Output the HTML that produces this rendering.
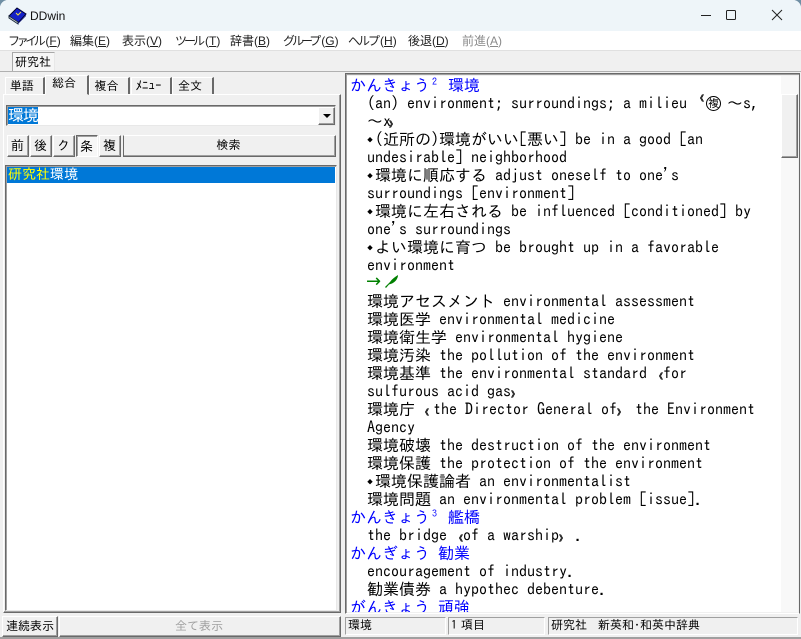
<!DOCTYPE html>
<html lang="ja"><head><meta charset="utf-8"><title>DDwin</title>
<style>
html,body{margin:0;padding:0;background:#6f8fa5}
body{width:801px;height:639px;overflow:hidden;position:relative}
*{box-sizing:border-box}
.a{position:absolute;white-space:pre}
#win{position:absolute;left:0;top:0;width:801px;height:639px;background:#f0f0f0;border-radius:8px 8px 0 0;overflow:hidden}
.g{font-family:"IPAGothic","Noto Sans CJK JP",monospace;font-size:12px;line-height:16px;color:#000}
.m{font-family:"Liberation Sans","Noto Sans CJK JP",sans-serif;font-size:12px;line-height:16px;color:#222}
.k{letter-spacing:-3.4px;margin-right:3px}
.btn{position:absolute;background:#f0f0f0;border:1px solid;border-color:#fff #696969 #696969 #fff;box-shadow:inset -1px -1px 0 #a0a0a0;text-align:center;font-family:"IPAGothic",monospace;font-size:12px;line-height:18px;color:#000}
.s14{font-size:13px;line-height:20px;padding-right:1px}
.sunk{position:absolute;border:1px solid;border-color:#a0a0a0 #fff #fff #a0a0a0;font-family:"IPAGothic",monospace;font-size:12px;line-height:15px;padding-left:2px;color:#000;white-space:pre}
.tab{position:absolute;font-family:"IPAGothic",monospace;font-size:12px;line-height:16px;text-align:center;background:#f0f0f0;border-left:1px solid #fff;border-top:1px solid #fff;border-right:2px solid #696969;padding-right:5px}
#txt{position:absolute;left:347px;top:76px;width:434px;height:536px;background:#fff;overflow:hidden;font-family:"IPAGothic","Noto Sans CJK JP",monospace;font-size:16px;line-height:18px;color:#000}
#txt div{position:absolute;white-space:pre;height:18px}
.b{color:#0000ff}
.d{font-size:6px;display:inline-block;width:8px;vertical-align:3px;line-height:6px}
.q{font-size:8px;display:inline-block;width:8px;font-weight:bold;line-height:8px}
.qo{position:relative;left:-2px}
</style></head><body>
<div id="win">
<!-- title bar -->
<div class="a" style="left:0;top:0;width:801px;height:31px;background:#eef5f9"></div>
<svg class="a" style="left:8px;top:6px" width="19" height="19" viewBox="0 0 19 19">
<path d="M1 10 L9 2 L18 8 L10 17 Z" fill="#1420c8" stroke="#000030" stroke-width="1"/>
<path d="M1 10 L1 12 L10 18 L10 16 Z" fill="#d8d8e0" stroke="#203040" stroke-width="1"/>
<path d="M10 17 L18 9 L18 10 L10 18Z" fill="#101880"/>
<path d="M8 7 L10 9 L13 6" fill="none" stroke="#f0e040" stroke-width="1"/>
</svg>
<div class="a" style="left:30px;top:8px;font:12px/16px 'Liberation Sans',sans-serif;color:#111">DDwin</div>
<svg class="a" style="left:680px;top:5px" width="121" height="22" viewBox="0 0 121 22" fill="none" stroke="#222" stroke-width="1">
<path d="M21 10.5H31"/><rect x="46.5" y="5.5" width="9" height="9" rx="1"/>
<path d="M92 5L102 15M102 5L92 15"/></svg>
<!-- menu -->
<div class="a" style="left:0;top:31px;width:801px;height:19px;background:#fff"></div>
<div class="a m" style="left:8px;top:33px"><span class="k">ファイル</span>(<u>F</u>)</div>
<div class="a m" style="left:70px;top:33px">編集(<u>E</u>)</div>
<div class="a m" style="left:122px;top:33px">表示(<u>V</u>)</div>
<div class="a m" style="left:175px;top:33px"><span class="k" style="letter-spacing:-3px">ツール</span>(<u>T</u>)</div>
<div class="a m" style="left:230px;top:33px">辞書(<u>B</u>)</div>
<div class="a m" style="left:283px;top:33px"><span class="k" style="letter-spacing:-3px">グループ</span>(<u>G</u>)</div>
<div class="a m" style="left:348px;top:33px"><span class="k" style="letter-spacing:-2px;margin-right:2px">ヘルプ</span>(<u>H</u>)</div>
<div class="a m" style="left:408px;top:33px">後退(<u>D</u>)</div>
<div class="a m" style="left:462px;top:33px;color:#8a8a8a">前進(<u>A</u>)</div>
<div class="a" style="left:0;top:50px;width:801px;height:1px;background:#e0e0e0"></div>
<!-- toolbar -->
<div class="a" style="left:12px;top:52px;width:43px;height:20px;border:1px solid;border-color:#a8a8a8 #e8e8e8 #fff #a8a8a8;background:#f6f6f6"></div>
<div class="a g" style="left:15px;top:54px">研究社</div>
<div class="a" style="left:0;top:71px;width:801px;height:1px;background:#b0b0b0"></div>
<!-- left panel -->
<div class="a" style="left:3px;top:94px;width:338px;height:519px;border:1px solid;border-color:#fff #696969 #696969 #fff;box-shadow:inset -1px -1px 0 #a0a0a0"></div>
<div class="tab" style="left:5px;top:77px;width:40px;height:17px">単語</div>
<div class="tab" style="left:89px;top:77px;width:41px;height:17px">複合</div>
<div class="tab" style="left:131px;top:77px;width:41px;height:17px;font-size:13px">ﾒﾆｭｰ</div>
<div class="tab" style="left:172px;top:77px;width:42px;height:17px">全文</div>
<div class="tab" style="left:45px;top:75px;width:44px;height:20px;border-bottom:1px solid #f0f0f0;line-height:15px">総合</div>
<!-- combo -->
<div class="a" style="left:6px;top:105px;width:330px;height:21px;background:#fff;border:1px solid;border-color:#696969 #e8e8e8 #e8e8e8 #696969;box-shadow:inset 1px 1px 0 #a0a0a0"></div>
<div class="a" style="left:8px;top:107px;width:30px;height:17px;background:#0078d7"></div>
<div class="a" style="left:8px;top:107px;font:16px/17px 'IPAGothic',monospace;color:#fff;width:30px;letter-spacing:-1px">環境</div>
<div class="btn" style="left:318px;top:107px;width:17px;height:18px"></div>
<div class="a" style="left:323px;top:114px;width:0;height:0;border-left:4px solid transparent;border-right:4px solid transparent;border-top:4px solid #000"></div>
<!-- buttons -->
<div class="btn s14" style="left:7px;top:135px;width:22px;height:22px">前</div>
<div class="btn s14" style="left:30px;top:135px;width:22px;height:22px">後</div>
<div class="btn s14" style="left:53px;top:135px;width:22px;height:22px">ク</div>
<div class="btn s14" style="left:76px;top:135px;width:22px;height:22px;border-color:#696969 #fff #fff #696969;box-shadow:inset 1px 1px 0 #a0a0a0;background:#f7f7f7;line-height:21px">条</div>
<div class="btn s14" style="left:99px;top:135px;width:22px;height:22px">複</div>
<div class="btn" style="left:123px;top:135px;width:213px;height:22px;border-color:#fff #696969 #696969 #696969;padding-right:2px">検索</div>
<!-- list -->
<div class="a" style="left:5px;top:165px;width:332px;height:446px;background:#fff;border:1px solid;border-color:#696969 #e8e8e8 #e8e8e8 #696969;box-shadow:inset 1px 1px 0 #a0a0a0"></div>
<div class="a" style="left:7px;top:167px;width:328px;height:16px;background:#0078d7"></div>
<div class="a" style="left:8px;top:166px;font:14px/17px 'IPAGothic',monospace;color:#fff"><span style="color:#ff0">研究社</span>環境</div>
<!-- bottom left -->
<div class="btn" style="left:2px;top:616px;width:56px;height:21px;line-height:19px">連続表示</div>
<div class="btn" style="left:59px;top:616px;width:282px;height:21px;line-height:19px;color:#a0a0a0;padding-right:2px">全て表示</div>
<!-- right panel -->
<div class="a" style="left:345px;top:73px;width:455px;height:541px;border:1px solid;border-color:#696969 #696969 #fff #696969;box-shadow:inset 1px 1px 0 #a0a0a0"></div>
<div class="a" style="left:781px;top:76px;width:17px;height:536px;background:#f8f8f8"></div>
<div class="btn" style="left:781px;top:94px;width:17px;height:64px"></div>
<div id="txt">
<div class="b" style="left:3px;top:0"><span>かんきょう</span></div>
<div class="b" style="left:85px;top:-3px;font-size:10px">2</div>
<div class="b" style="left:101px;top:0">環境</div>
<div style="left:20px;top:18px">(an) environment; surroundings; a milieu</div>
<div style="left:349px;top:18px" class="q">《</div>
<div style="left:359px;top:20px;width:15px;height:15px;border:1px solid #000;border-radius:50%;font-size:11px;line-height:13px;text-align:center">複</div>
<div style="left:380px;top:18px">～s,</div>
<div style="left:20px;top:36px">～x<span class="q" style="margin-left:-2px">》</span></div>
<div style="left:20px;top:54px"><span class="d">◆</span>(近所の)環境がいい[悪い] be in a good [an</div>
<div style="left:20px;top:72px">undesirable] neighborhood</div>
<div style="left:20px;top:90px"><span class="d">◆</span>環境に順応する adjust oneself to one's</div>
<div style="left:20px;top:108px">surroundings [environment]</div>
<div style="left:20px;top:126px"><span class="d">◆</span>環境に左右される be influenced [conditioned] by</div>
<div style="left:20px;top:144px">one's surroundings</div>
<div style="left:20px;top:162px"><span class="d">◆</span>よい環境に育つ be brought up in a favorable</div>
<div style="left:20px;top:180px">environment</div>
<div style="left:19px;top:197px;color:#008000;font-family:'DejaVu Sans',sans-serif;font-size:18px">→</div>
<svg style="position:absolute;left:36px;top:197px" width="18" height="16" viewBox="0 0 18 16"><path d="M2 14 L7 9 C9 6 12 4 15 2 C15 6 12 9 9 10.5 L6 11.5 L3 15Z" fill="#008000"/></svg>
<div style="left:20px;top:216px">環境アセスメント environmental assessment</div>
<div style="left:20px;top:234px">環境医学 environmental medicine</div>
<div style="left:20px;top:252px">環境衛生学 environmental hygiene</div>
<div style="left:20px;top:270px">環境汚染 the pollution of the environment</div>
<div style="left:20px;top:288px">環境基準 the environmental standard <span class="q">《</span>for</div>
<div style="left:20px;top:306px">sulfurous acid gas<span class="q">》</span></div>
<div style="left:20px;top:324px">環境庁 <span class="q qo">《</span><span style="margin-left:2px">the Director General of</span><span class="q" style="margin-right:2px">》</span> the Environment</div>
<div style="left:20px;top:342px">Agency</div>
<div style="left:20px;top:360px">環境破壊 the destruction of the environment</div>
<div style="left:20px;top:378px">環境保護 the protection of the environment</div>
<div style="left:20px;top:396px"><span class="d">◆</span>環境保護論者 an environmentalist</div>
<div style="left:20px;top:414px">環境問題 an environmental problem [issue].</div>
<div class="b" style="left:3px;top:432px">かんきょう</div>
<div class="b" style="left:85px;top:429px;font-size:10px">3</div>
<div class="b" style="left:101px;top:432px">艦橋</div>
<div style="left:20px;top:450px">the bridge <span class="q">《</span>of a warship<span class="q">》</span> .</div>
<div class="b" style="left:3px;top:468px">かんぎょう 勧業</div>
<div style="left:20px;top:486px">encouragement of industry.</div>
<div style="left:20px;top:504px">勧業債券 a hypothec debenture.</div>
<div class="b" style="left:3px;top:522px">がんきょう 頑強</div>
</div>
<!-- status -->
<div class="sunk" style="left:345px;top:617px;width:101px;height:18px">環境</div>
<div class="sunk" style="left:448px;top:617px;width:97px;height:18px">1<span style="font-size:8px"> </span>項目</div>
<div class="sunk" style="left:548px;top:617px;width:250px;height:18px">研究社<span style="display:inline-block;width:11px"></span>新英和･和英中辞典</div>
<div class="a" style="left:0;top:637px;width:801px;height:2px;background:#a0a0a0"></div>
</div>
</body></html>
